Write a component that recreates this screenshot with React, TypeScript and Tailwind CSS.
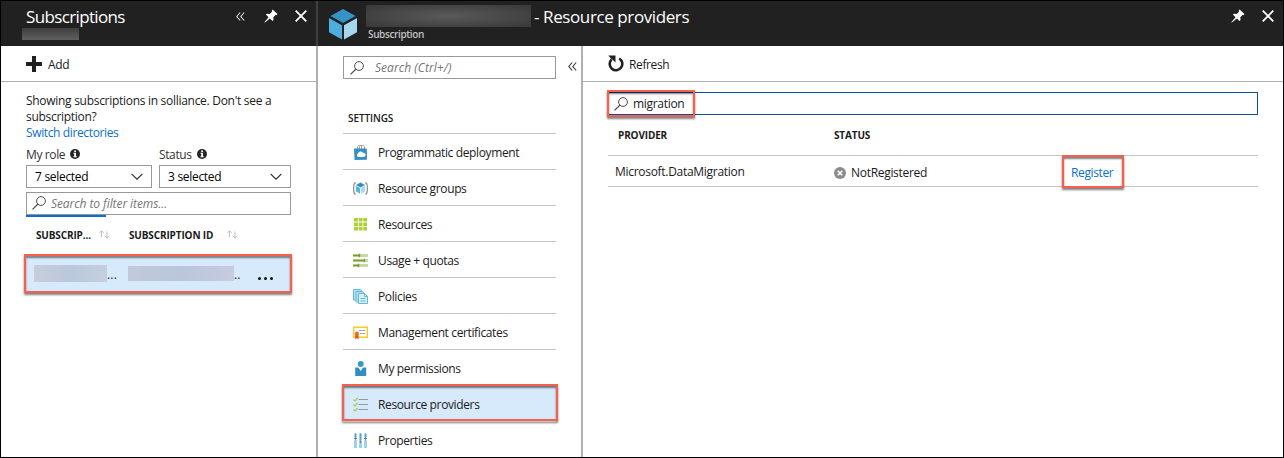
import React, { ReactNode } from "react";

const CloseIcon = () => (
  <svg className="block h-[12px] w-[12px]" viewBox="0 0 12 12" fill="none" stroke="#fff" strokeWidth="1.8">
    <path d="M.7.7l10.6 10.6M11.3.7L.7 11.3" />
  </svg>
);

const PinIcon = () => (
  <svg className="block h-[14px] w-[14px]" viewBox="0 0 14 14" fill="#fff">
    <path d="M8.6.6l4.9 4.5-.9.9-1-.1-2.3 2.4.2 2.8-1 1L5.9 9.600.9 13.500.3 13.200 4.500 8.200 1.900 5.600l1-.9 2.900.2L8.100 2.600 7.800 1.500z" />
  </svg>
);

const Chevrons = ({ color }: { color: string }) => (
  <svg className="block h-[9px] w-[9px]" viewBox="0 0 9 9" fill="none" stroke={color} strokeWidth="1.1">
    <path d="M4.200.5L.8 4.500l3.400 4M8.200.5L4.800 4.500l3.400 4" />
  </svg>
);

const SearchIcon = () => (
  <svg className="block h-[14px] w-[14px] shrink-0" viewBox="0 0 14 14" fill="none" stroke="#4a4a4a" strokeWidth="1">
    <circle cx="9" cy="5" r="4.400" />
    <path d="M5.800 8.200L.5 13.400" strokeWidth="1.200" />
  </svg>
);

const InfoIcon = () => (
  <svg className="block h-[10px] w-[10px]" viewBox="0 0 10 10">
    <circle cx="5" cy="5" r="5" fill="#262626" />
    <path d="M4.200 1.500h1.800v1.400H4.200zM3.500 3.800H6v3.400h.8v1H3.400v-1h.8V4.800h-.7z" fill="#fff" />
  </svg>
);

const DownIcon = () => (
  <svg className="block h-[7px] w-[12px]" viewBox="0 0 12 7" fill="none" stroke="#333" strokeWidth="1.200">
    <path d="M.6.8L6 6.200 11.400.8" />
  </svg>
);

const SortIcon = () => (
  <svg className="block h-[9px] w-[11px]" viewBox="0 0 11 9" fill="none" stroke="#b9bec4" strokeWidth="1">
    <path d="M2.500 7V.8M.4 2.900L2.500.8l2.100 2.100M8 1.500v6.600M5.900 6L8 8.100 10.100 6" />
  </svg>
);

const PlusIcon = () => (
  <svg className="block h-[16px] w-[16px]" viewBox="0 0 16 16" fill="#212121">
    <path d="M6 0h4v6h6v4h-6v6H6v-6H0V6h6z" />
  </svg>
);

const RefreshIcon = () => (
  <svg className="block h-[17px] w-[16px]" viewBox="0 0 16 17">
    <path d="M11.200 3.500A6.300 6.300 0 1 1 3.600 4.400" fill="none" stroke="#212121" strokeWidth="2.600" />
    <path d="M.2.5h7.300v6.900L5.200 5.200 3 3.500z" fill="#212121" />
  </svg>
);

const CubeIcon = () => (
  <svg className="block h-[31px] w-[28px]" viewBox="0 0 28 31">
    <path d="M14 0l12.600 7L14 14 1.400 7z" fill="#3593c8" />
    <path d="M0 8.900l13 7.300V30.500L0 23.200z" fill="#4eaede" />
    <path d="M28 8.900l-13 7.300V30.500l13-7.300z" fill="#a5d7ee" />
  </svg>
);

const icons: Record<string, ReactNode> = {
  bag: (
    <>
      <path d="M4.500 4V1.500L5.500.6h3v3.300M6.500 4V1.500L7.500.6h3l1 .9V4" fill="none" stroke="#a3a3a3" />
      <path d="M1 3.600h12.800l.2 11.200L1.500 15z" fill="#3591c5" />
      <path d="M4.900 11.900a1.900 1.900 0 0 1 .2-3.500 2.600 2.600 0 0 1 4.700-.6 2.100 2.100 0 0 1 1.300 4.100z" fill="#fff" />
    </>
  ),
  group: (
    <>
      <path d="M3 2H1.500Q.6 4 .6 7.500T1.500 13H3M12 2h1.500q.9 2 .9 5.500T13.500 13H12" fill="none" stroke="#8a8a8a" strokeWidth="1.200" />
      <path d="M7.500 1.500L12 4 7.500 6.500 3 4z" fill="#2f8dc4" />
      <path d="M2.800 4.700L7 7.100v5.700l-4.200-2.500z" fill="#55b4e2" />
      <path d="M12.200 4.700L8 7.100v5.700l4.200-2.500z" fill="#a5d9f2" />
    </>
  ),
  grid: (
    <path d="M1 1h4v3.600H1zM5.700 1h3.800v3.600H5.700zM10.200 1H14v3.600h-3.800zM1 5.400h4V9H1zM5.700 5.400h3.800V9H5.700zM10.200 5.400H14V9h-3.800zM1 9.800h4v3.600H1zM5.700 9.800h3.800v3.600H5.700zM10.200 9.800H14v3.600h-3.800z" fill="#b0d136" />
  ),
  sliders: (
    <>
      <path d="M0 1h15v3H0zM0 6h15v3H0zM0 11h15v3H0z" fill="#c5dca0" />
      <path d="M0 1.700h6v1.600H0zM0 6.700h10.500v1.600H0zM0 11.700h5v1.600H0z" fill="#76a318" />
      <path d="M5.800.7h1.400v3.500H5.800zM10.600 5.700H12v3.500h-1.400zM4.800 10.700h1.400v3.500H4.800z" fill="#80876f" />
    </>
  ),
  policies: (
    <>
      <path d="M.5.5h7l1.500 1.500V11H.5z" fill="#b5e0f4" stroke="#62b8df" />
      <path d="M3 2.500h6.500L11 4v9H3z" fill="#b5e0f4" stroke="#62b8df" />
      <path d="M5.500 4.500h6l3 3v7h-9z" fill="#d8f0fb" stroke="#62b8df" />
      <path d="M11.500 4.500v3h3M7.500 9.500h5M7.500 12h5" fill="none" stroke="#62b8df" />
    </>
  ),
  cert: (
    <>
      <path d="M.7 2.200h13.600v10.100H.7z" fill="#fff" stroke="#f8cb29" strokeWidth="1.400" />
      <path d="M6 5.500h6.300M7 8.500h5.300" stroke="#a3a3a3" strokeWidth="1.100" />
      <path d="M2.200 8.500h3.300v5.900L3.900 13l-1.700 1.400z" fill="#e35214" />
      <circle cx="3.900" cy="8.600" r="2" fill="#eb6c2b" />
    </>
  ),
  person: (
    <>
      <circle cx="7.700" cy="3" r="3" fill="#3399ca" />
      <path d="M2.200 6.500h3.200l2.300 3.500L10 6.500h3.200V15H2.200z" fill="#3190c3" />
    </>
  ),
  checks: (
    <>
      <path d="M5.500 2.500H15M5.500 7.500H15M5.500 12.500H15" stroke="#929ba3" strokeWidth="1.200" />
      <path d="M.5 2.500L2 4l2.700-3M.5 7.500L2 9l2.700-3M.5 12.500L2 14l2.700-3" fill="none" stroke="#a6c956" strokeWidth="1.200" />
    </>
  ),
  props: (
    <>
      <path d="M2.500.5v14M7.500.5v14M12.500.5v14" stroke="#8f979c" strokeWidth="1.200" />
      <path d="M1 7.500h3v7.500H1zM6 10.500h3V15H6zM11 7.500h3v7.500h-3z" fill="#9bd3ee" />
      <path d="M1.500.5h2v4h-2zM6.500.5h2v7h-2zM11.500.5h2v4h-2z" fill="#57a8cf" />
      <path d="M1 5h3v1H1zM6 8.500h3v1H6zM11 5h3v1h-3z" fill="#6d7579" />
    </>
  ),
};

const menu = [
  { icon: "bag", label: "Programmatic deployment" },
  { icon: "group", label: "Resource groups" },
  { icon: "grid", label: "Resources" },
  { icon: "sliders", label: "Usage + quotas" },
  { icon: "policies", label: "Policies" },
  { icon: "cert", label: "Management certificates" },
  { icon: "person", label: "My permissions" },
  { icon: "checks", label: "Resource providers", active: true },
  { icon: "props", label: "Properties" },
];

/* Red marker frame with a soft drop shadow, laid over the element it surrounds. */
const Marker = ({ className }: { className: string }) => (
  <div
    className={`pointer-events-none absolute border-2 border-[#f95f4d] shadow-[0_2px_2px_rgba(0,0,0,0.5),inset_0_2px_2px_rgba(0,0,0,0.5)] ${className}`}
  />
);

const Select = ({ label, value, width }: { label: string; value: string; width: string }) => (
  <div className={width}>
    <div className="flex h-[18px] items-center gap-[5px] text-[#333]">
      <span className="pt-[2px]">{label}</span>
      <InfoIcon />
    </div>
    <div className="mt-[2px] flex h-[23px] items-center justify-between border border-[#999] pr-[8px] pl-[8px] text-black">
      <span className="tracking-[-0.3px]">{value}</span>
      <DownIcon />
    </div>
  </div>
);

const Subscriptions = () => (
  <section className="flex w-[315px] shrink-0 flex-col">
    <header className="flex h-[45px] justify-between bg-[#212121] pr-[9px] pl-[25px] text-white">
      <div>
        <h1 className="h-[27px] text-[17px] leading-[31px] tracking-[-0.64px]">Subscriptions</h1>
        <div className="-ml-1 h-[12px] w-[57px] bg-linear-to-b from-[#3e3e3e] to-[#606060]" />
      </div>
      <div className="flex h-[30px] items-center">
        <Chevrons color="#e0e0e0" />
        <div className="ml-[19px]"><PinIcon /></div>
        <div className="ml-[17px]"><CloseIcon /></div>
      </div>
    </header>
    <div className="flex h-[36px] items-center gap-[6px] border-b border-[#b0b0b0] pl-[25px]">
      <PlusIcon />
      <span className="pt-[2px]">Add</span>
    </div>
    <div className="pt-[11px] pr-[25px] pl-[25px]">
      <p className="leading-[16px] whitespace-nowrap tracking-[-0.29px]">
        Showing subscriptions in solliance. Don't see a
        <br />
        subscription?
      </p>
      <p className="leading-[16px] text-[#0a6fd1]">Switch directories</p>
      <div className="mt-[4px] flex gap-[7px]">
        <Select label="My role" value="7 selected" width="w-[126px]" />
        <Select label="Status" value="3 selected" width="w-[132px]" />
      </div>
      <div className="mt-[4px] flex h-[23px] items-center gap-[5px] border border-[#999] pb-[2px] pl-[5px] text-[#757575] italic tracking-[-0.08px]">
        <SearchIcon />
        <span className="pt-[2px]">Search to filter items...</span>
      </div>
      <div className="h-[2px] w-[80px] bg-[#0b6fce]" />
      <div className="flex h-[37px] items-center pb-[2px] pl-[10px] text-[10px] font-bold tracking-[-0.14px]">
        <span className="w-[63px]">SUBSCRIP...</span>
        <SortIcon />
        <span className="ml-[19px] w-[98px]">SUBSCRIPTION ID</span>
        <SortIcon />
      </div>
      <div className="relative mt-[3px] flex h-[34px] items-center bg-[#d7eafc] pl-[8px]">
        <div className="mb-[2px] h-[17px] w-[73px] bg-linear-to-r from-[#c9cddc] via-[#b9c8dc] to-[#c6cfe0]" />
        <span className="w-[21px] pt-[2px] tracking-[0.2px]">...</span>
        <div className="mb-[2px] h-[15px] w-[106px] bg-linear-to-r from-[#c2c9da] via-[#b9c6dc] to-[#c7cbe0]" />
        <span className="w-[24px] pt-[2px] tracking-[0.2px]">..</span>
        <svg className="mt-[9px] h-[3px] w-[15px]" viewBox="0 0 15 3" fill="#111">
          <circle cx="1.500" cy="1.500" r="1.500" />
          <circle cx="7.500" cy="1.500" r="1.500" />
          <circle cx="13.500" cy="1.500" r="1.500" />
        </svg>
        <Marker className="-top-[3px] -right-[1px] -left-[2px] h-[39px]" />
      </div>
    </div>
  </section>
);

const Menu = () => (
  <nav className="w-[263px] shrink-0 pt-[10px] pl-[25px]">
    <div className="flex items-start">
      <div className="flex h-[23px] w-[213px] items-center gap-[11px] border border-[#999] pl-[6px] text-[#757575] italic">
        <SearchIcon />
        <span className="pt-px tracking-[0.05px]">Search (Ctrl+/)</span>
      </div>
      <div className="mt-[6px] ml-[12px]"><Chevrons color="#333" /></div>
    </div>
    <h2 className="mt-[31px] pl-[5px] text-[10px] leading-[16px] font-semibold tracking-[-0.1px]">SETTINGS</h2>
    <ul className="mt-[7px] w-[213px]">
      {menu.map((m) => (
        <li key={m.label} className={`relative h-[36px] border-t border-[#c4c4c4] ${m.active ? "bg-[#d7eafc]" : ""}`}>
          <div className="flex h-[37px] items-center gap-[10px] pl-[10px]">
            <svg className="block h-[15px] w-[15px]" viewBox="0 0 15 15">{icons[m.icon]}</svg>
            <span>{m.label}</span>
          </div>
          {m.active && <Marker className="-top-[2px] -right-[2px] -left-[1px] h-[37px]" />}
        </li>
      ))}
    </ul>
  </nav>
);

const Providers = () => (
  <main className="min-w-0 flex-1">
    <div className="flex h-[36px] items-center gap-[5px] border-b border-[#b0b0b0] pl-[25px]">
      <RefreshIcon />
      <span className="pt-[2px]">Refresh</span>
    </div>
    <div className="pt-[10px] pr-[25px] pl-[25px]">
      <div className="relative flex h-[23px] items-center gap-[5px] border border-[#0b4f9e] pl-[5px]">
        <SearchIcon />
        <span className="tracking-[-0.3px]">migration</span>
        <Marker className="-top-[3px] -left-[2px] h-[27px] w-[88px]" />
      </div>
      <div className="flex h-[41px] items-center border-b border-[#c4c4c4] pl-[10px] text-[10px] font-bold tracking-[-0.15px]">
        <span className="w-[216px]">PROVIDER</span>
        <span>STATUS</span>
      </div>
      <div className="flex h-[31px] items-center border-b border-[#c4c4c4] pl-[7px]">
        <span className="w-[219px] pt-[2px] tracking-[-0.29px]">Microsoft.DataMigration</span>
        <svg className="mt-[3px] mr-[5px] block h-[12px] w-[12px]" viewBox="0 0 12 12">
          <circle cx="6" cy="6" r="6" fill="#8c8c8c" />
          <path d="M3.800 3.800l4.400 4.400M8.200 3.800L3.800 8.200" stroke="#fff" strokeWidth="1.600" />
        </svg>
        <span className="w-[220px] pt-[4px] tracking-[-0.3px]">NotRegistered</span>
        <span className="relative pt-[4px] text-[#0a6fd1]">
          Register
          <Marker className="-top-[5px] -left-[9px] h-[33px] w-[62px]" />
        </span>
      </div>
    </div>
  </main>
);

export default function App() {
  return (
    <div className="flex h-[458px] w-[1284px] overflow-hidden border border-black bg-white font-['Open_Sans','Noto_Sans',sans-serif] text-[12px] leading-[18px] tracking-[-0.37px] text-[#1a1a1a]">
      <Subscriptions />
      <div className="flex w-[2px] shrink-0 flex-col bg-[#b0b0b0]">
        <div className="h-[45px] bg-[#404040]" />
      </div>
      <div className="flex min-w-0 flex-1 flex-col">
        <header className="flex h-[45px] shrink-0 bg-[#212121] pr-[9px] pl-[11px] text-white">
          <div className="pt-[8px]"><CubeIcon /></div>
          <div className="ml-[11px] flex-1">
            <div className="flex h-[26px] items-start">
              <div className="mt-[4px] -ml-[2px] h-[22px] w-[165px] bg-radial from-[#5a5a5a] to-[#383838]" />
              <h1 className="ml-[3px] text-[17px] leading-[31px] tracking-[-0.4px]">- Resource providers</h1>
            </div>
            <p className="text-[10px] leading-[15px] font-semibold text-[#c2c2c2]">Subscription</p>
          </div>
          <div className="flex h-[30px] items-center gap-[17px]">
            <PinIcon />
            <CloseIcon />
          </div>
        </header>
        <div className="flex min-h-0 flex-1">
          <Menu />
          <div className="w-[2px] shrink-0 bg-[#b0b0b0]" />
          <Providers />
        </div>
      </div>
    </div>
  );
}
